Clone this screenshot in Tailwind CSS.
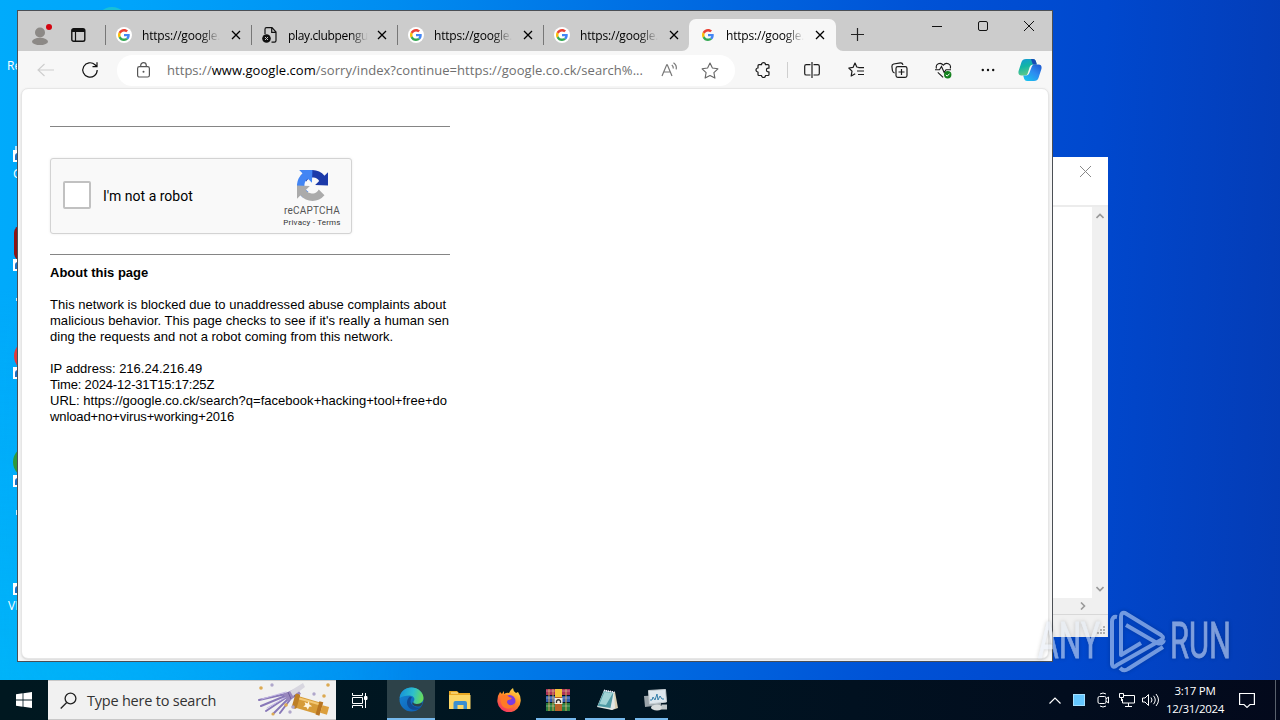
<!DOCTYPE html>
<html lang="en">
<head>
<meta charset="utf-8">
<title>Desktop</title>
<script src="https://cdn.jsdelivr.net/npm/@tailwindcss/browser@4"></script>
</head>
<body class="w-[1280px] h-[720px] overflow-hidden font-['Open_Sans','Noto_Sans',sans-serif]">
<svg class="hidden">
  <symbol id="g" viewBox="0 0 48 48">
    <path fill="#EA4335" d="M24 9.5c3.54 0 6.71 1.22 9.21 3.6l6.85-6.85C35.9 2.38 30.47 0 24 0 14.62 0 6.51 5.38 2.56 13.22l7.98 6.19C12.43 13.72 17.74 9.5 24 9.5z"/>
    <path fill="#4285F4" d="M46.98 24.55c0-1.57-.15-3.09-.38-4.55H24v9.02h12.94c-.58 2.96-2.26 5.48-4.78 7.18l7.73 6c4.51-4.18 7.09-10.36 7.09-17.65z"/>
    <path fill="#FBBC05" d="M10.53 28.59c-.48-1.45-.76-2.99-.76-4.59s.27-3.14.76-4.59l-7.98-6.19C.92 16.46 0 20.12 0 24s.92 7.54 2.56 10.78l7.97-6.19z"/>
    <path fill="#34A853" d="M24 48c6.48 0 11.93-2.13 15.89-5.81l-7.73-6c-2.15 1.45-4.92 2.3-8.16 2.3-6.26 0-11.57-4.22-13.47-9.91l-7.98 6.19C6.51 42.62 14.62 48 24 48z"/>
  </symbol>
  <symbol id="x" viewBox="0 0 10 10"><path d="M1 1l8 8M9 1l-8 8" stroke="currentColor" stroke-width="1.3" fill="none"/></symbol>
  <symbol id="shortcut" viewBox="0 0 12 12"><path d="M0 0h12v12H0z" fill="#fff"/><path d="M3 10V6q0-2 2-2h4" stroke="#1b6fc4" stroke-width="2" fill="none"/></symbol>
</svg>
<main class="relative w-[1280px] h-[720px] overflow-hidden bg-[linear-gradient(93deg,#00abfb_0%,#00a4fb_10%,#008cf0_30%,#0070e4_48%,#0052d6_70%,#0048ce_84%,#043bb4_100%)]">

  <!-- desktop shortcuts partly behind the browser -->
  <div class="absolute inset-0 bg-[linear-gradient(to_top,#00b4f8_0%,transparent_60%)] w-[420px] h-[720px] [mask-image:linear-gradient(to_right,black,transparent)]"></div>
  <div class="absolute left-[96px] top-[7px] w-8 h-8 rounded-full bg-[#18c0d8]"></div>
  <div class="absolute left-[7px] top-[58px] text-[12px] leading-4 text-white whitespace-nowrap">Re</div>
  <svg class="absolute left-[13px] top-[150px] w-3 h-3"><use href="#shortcut"/></svg>
  <div class="absolute left-[15px] top-[146px] w-1 h-1 bg-white/70"></div>
  <div class="absolute left-[13px] top-[166px] text-[12px] leading-4 text-white">G</div>
  <div class="absolute left-[14px] top-[225px] w-6 h-9 rounded-lg bg-[#8c1414]"></div>
  <svg class="absolute left-[13px] top-[259px] w-3 h-3"><use href="#shortcut"/></svg>
  <div class="absolute left-[16px] top-[298px] w-1 h-[3px] bg-white/80"></div>
  <div class="absolute left-[14px] top-[340px] w-8 h-8 rounded-full bg-[#e23a3a]"></div>
  <svg class="absolute left-[13px] top-[367px] w-3 h-3"><use href="#shortcut"/></svg>
  <div class="absolute left-[13px] top-[446px] w-8 h-8 rounded-full bg-[#2e9a3c]"></div>
  <svg class="absolute left-[13px] top-[475px] w-3 h-3"><use href="#shortcut"/></svg>
  <div class="absolute left-[16px] top-[510px] w-1 h-[5px] bg-white/80"></div>
  <svg class="absolute left-[13px] top-[583px] w-3 h-3"><use href="#shortcut"/></svg>
  <div class="absolute left-[8px] top-[598px] text-[12px] leading-4 text-white">VL</div>

  <!-- background window -->
  <section class="absolute left-[940px] top-[157px] w-[168px] h-[480px] bg-white flex flex-col">
    <div class="h-[50px] border-b-2 border-[#ececec] flex justify-end pt-[9px] pr-[17px]"><svg class="w-[11px] h-[11px] text-[#888]" viewBox="0 0 11 11"><path d="M0 0l11 11M11 0L0 11" stroke="currentColor"/></svg></div>
    <div class="h-[391px] flex justify-end">
      <div class="w-4 bg-[#f0f0f0] flex flex-col items-center justify-between py-[6px] pr-[1px]">
        <svg class="w-2 h-[6px]" viewBox="0 0 8 6"><path d="M.5 5L4 1.5 7.500 5" stroke="#999" stroke-width="1.6" fill="none"/></svg>
        <svg class="w-2 h-[6px]" viewBox="0 0 8 6"><path d="M.5 1L4 4.500 7.500 1" stroke="#999" stroke-width="1.6" fill="none"/></svg>
      </div>
    </div>
    <div class="h-[17px] bg-[#f0f0f0] border-b border-[#d8d8d8] flex justify-end items-center pr-[22px]"><svg class="w-[6px] h-2" viewBox="0 0 6 8"><path d="M1 .5L4.500 4 1 7.500" stroke="#999" stroke-width="1.6" fill="none"/></svg></div>
    <div class="flex-1 bg-[#f0f0f0] flex justify-end items-end p-[2px]"><svg class="w-[9px] h-[9px]" viewBox="0 0 9 9" fill="#b0b0b0"><path d="M6 0h2v2H6zM3 3h2v2H3zM6 3h2v2H6zM0 6h2v2H0zM3 6h2v2H3zM6 6h2v2H6z"/></svg></div>
  </section>

  <!-- browser window -->
  <section class="absolute left-[17px] top-[10px] w-[1036px] h-[652px] border border-[#4b4f55] bg-[#f7f7f7] flex flex-col">
    <div class="h-10 bg-[#cccccc] flex shrink-0">
      <div class="w-[87px] flex items-center pl-[13px] gap-[21px] pt-[8px]">
        <svg class="w-[22px] h-[24px] mt-[-4px]" viewBox="0 0 22 24"><circle cx="9" cy="11.500" r="5" fill="#8c8986"/><ellipse cx="9" cy="20.500" rx="8" ry="3.700" fill="#8c8986"/><circle cx="18" cy="6" r="3" fill="#d4040f"/></svg>
        <svg class="w-[15px] h-[14px] ml-[-3px]" viewBox="0 0 15 14"><rect x=".8" y=".8" width="13" height="12.400" rx="1.800" fill="none" stroke="#111" stroke-width="1.400"/><path d="M1 1h13v3H1z" fill="#111"/><path d="M4.500 4v9" stroke="#111" stroke-width="1.200"/></svg>
      </div>
      <div class="w-[146px] flex items-center pt-[8px]"><i class="w-px h-5 bg-[#777]"></i><span class="w-4 h-4 ml-[10px] rounded-full bg-white flex items-center justify-center"><svg class="w-3 h-3"><use href="#g"/></svg></span><span class="ml-[10px] w-[78px] whitespace-nowrap text-[12px] tracking-[-0.2px] pt-px [mask-image:linear-gradient(to_right,black_75%,transparent)]">https://google.</span><svg class="w-[10px] h-[10px] ml-[11px]"><use href="#x"/></svg></div>
      <div class="w-[146px] flex items-center pt-[8px]"><i class="w-px h-5 bg-[#777]"></i><svg class="w-4 h-4 ml-[10px]" viewBox="0 0 16 16"><path d="M3 7V2.200Q3 .7 4.500.7H10L14 5v8.500q0 1.700-1.500 1.700H9.500M9.700 1v4.300H14" fill="none" stroke="#111" stroke-width="1.200"/><circle cx="4.500" cy="11.500" r="4.300" fill="#111"/><path d="M3 10l3 3M6 10l-3 3" stroke="#ccc"/></svg><span class="ml-[10px] w-[80px] whitespace-nowrap text-[12px] tracking-[-0.35px] pt-px [mask-image:linear-gradient(to_right,black_78%,transparent)]">play.clubpengu</span><svg class="w-[10px] h-[10px] ml-[9px]"><use href="#x"/></svg></div>
      <div class="w-[146px] flex items-center pt-[8px]"><i class="w-px h-5 bg-[#777]"></i><span class="w-4 h-4 ml-[10px] rounded-full bg-white flex items-center justify-center"><svg class="w-3 h-3"><use href="#g"/></svg></span><span class="ml-[10px] w-[78px] whitespace-nowrap text-[12px] tracking-[-0.2px] pt-px [mask-image:linear-gradient(to_right,black_75%,transparent)]">https://google.</span><svg class="w-[10px] h-[10px] ml-[11px]"><use href="#x"/></svg></div>
      <div class="w-[146px] flex items-center pt-[8px]"><i class="w-px h-5 bg-[#777]"></i><span class="w-4 h-4 ml-[10px] rounded-full bg-white flex items-center justify-center"><svg class="w-3 h-3"><use href="#g"/></svg></span><span class="ml-[10px] w-[78px] whitespace-nowrap text-[12px] tracking-[-0.2px] pt-px [mask-image:linear-gradient(to_right,black_75%,transparent)]">https://google.</span><svg class="w-[10px] h-[10px] ml-[11px]"><use href="#x"/></svg></div>
      <div class="relative w-[147px] mt-[8px] flex items-center rounded-t-[7px] bg-[#f7f7f7]">
        <svg class="absolute bottom-0 left-[-7px] w-[7px] h-[7px]" viewBox="0 0 7 7"><path d="M7 0v7H0A7 7 0 0 0 7 0" fill="#f7f7f7"/></svg>
        <svg class="absolute bottom-0 right-[-7px] w-[7px] h-[7px]" viewBox="0 0 7 7"><path d="M0 0v7h7A7 7 0 0 1 0 0" fill="#f7f7f7"/></svg>
        <svg class="w-3 h-3 ml-[13px]"><use href="#g"/></svg><span class="ml-[12px] w-[78px] whitespace-nowrap text-[12px] tracking-[-0.2px] pt-px [mask-image:linear-gradient(to_right,black_75%,transparent)]">https://google.</span><svg class="w-[10px] h-[10px] ml-[11px]"><use href="#x"/></svg>
      </div>
      <svg class="w-[13px] h-[13px] ml-[15px] mt-[17px]" viewBox="0 0 13 13"><path d="M6.500 0v13M0 6.500h13" stroke="#222" stroke-width="1.200"/></svg>
      <div class="ml-auto flex pr-[18px] pt-[10px] gap-[36px]">
        <svg class="w-[10px] h-[10px]" viewBox="0 0 10 10"><path d="M0 5.500h10" stroke="#111"/></svg>
        <svg class="w-[10px] h-[10px]" viewBox="0 0 10 10"><rect x=".5" y=".5" width="9" height="9" rx="1.500" fill="none" stroke="#111"/></svg>
        <svg class="w-[10px] h-[10px]" viewBox="0 0 10 10"><path d="M0 0l10 10M10 0L0 10" stroke="#111"/></svg>
      </div>
    </div>

    <div class="h-[37px] shrink-0 flex items-center pt-[1px]">
      <svg class="w-[18px] h-[14px] ml-[19px]" viewBox="0 0 18 14"><path d="M17 7H1M7.500 1L1 7l6.500 6" fill="none" stroke="#cdcdcd" stroke-width="1.100"/></svg>
      <svg class="w-[18px] h-[18px] ml-[26px]" viewBox="0 0 18 18"><path d="M16.200 9A7.200 7.200 0 1 1 14 3.800L15.800 5.500M16 1.200v4.500h-4.500" fill="none" stroke="#111" stroke-width="1.200"/></svg>
      <div class="ml-[18px] w-[618px] h-[31px] rounded-full bg-white flex items-center">
        <svg class="w-[13px] h-4 ml-[20px]" viewBox="0 0 13 16"><rect x=".6" y="4.600" width="11.800" height="10.400" rx="1.800" fill="none" stroke="#555" stroke-width="1.200"/><path d="M3.700 4.500V3.500a2.800 2.800 0 0 1 5.600 0v1" fill="none" stroke="#555" stroke-width="1.200"/><circle cx="6.500" cy="9.800" r="1" fill="#555"/></svg>
        <span class="ml-[17px] w-[480px] pt-px whitespace-nowrap text-[13px] text-[#6f6f6f] tracking-[0.045px]">https://<span class="text-black">www.google.com</span>/sorry/index?continue=https://google.co.ck/search%...</span>
        <svg class="w-[17px] h-[15px] ml-[14px] mt-[-2px]" viewBox="0 0 17 15"><path d="M1 14L5.700 2.800h.6L11 14M2.700 10h6.600M10.800 3q1.700 1.200 1.500 3.500M12.500.8q3.500 2.400 2.700 6.500" fill="none" stroke="#777" stroke-width="1.200"/></svg>
        <svg class="w-[18px] h-[17px] ml-[23px]" viewBox="0 0 18 17"><path d="M9 1l2.400 5 5.500.8-4 3.900 1 5.400L9 13.500l-4.900 2.600 1-5.400-4-3.900 5.500-.8z" fill="none" stroke="#666" stroke-width="1.100" stroke-linejoin="round"/></svg>
      </div>
      <div class="flex flex-1 items-center text-[#1b1b1b]">
        <svg class="w-4 h-4 ml-[20px]" viewBox="0 0 16 16"><path d="M4 2.700h2.500a2 2 0 0 1 4 0H13q1 0 1 1v2.500h-.8a1.800 1.800 0 0 0 0 3.600h.8v2.700q0 1-1 1h-2.500a2 2 0 0 1-4 0H4q-1 0-1-1V10a2 2 0 0 1 0-4V3.700q0-1 1-1z" fill="none" stroke="currentColor" stroke-width="1.200" stroke-linejoin="round"/></svg>
        <i class="w-px h-4 bg-[#cfcfcf] ml-[16px]"></i>
        <svg class="w-4 h-4 ml-[16px]" viewBox="0 0 16 16"><path d="M6.500 2.600H2.300Q.7 2.600.7 4.200v7.200q0 1.600 1.600 1.600H6.500M9.500 2.600h4.200q1.600 0 1.600 1.600v7.200q0 1.600-1.600 1.600H9.500M8 0v16" fill="none" stroke="currentColor" stroke-width="1.200"/></svg>
        <svg class="w-[17px] h-4 ml-[28px]" viewBox="0 0 17 16"><path d="M11 5.500L8.800 5 7 1 5 5.400.8 6l3.200 3.200L3.200 14l4-2.200M10.500 5.600H16M9 9h7M10 12.500h6" fill="none" stroke="currentColor" stroke-width="1.200" stroke-linejoin="round"/></svg>
        <svg class="w-[17px] h-4 ml-[26px]" viewBox="0 0 17 16"><rect x="5" y="4.700" width="11" height="10.600" rx="1.800" fill="none" stroke="currentColor" stroke-width="1.200"/><path d="M10.500 7v6M7.500 10h6M3.600 11Q1.800 10.500 1.400 8.500L.9 4.500Q.8 2.500 2.600 2L9.500.8q2-.1 2.500 2" fill="none" stroke="currentColor" stroke-width="1.200"/></svg>
        <svg class="w-[17px] h-[17px] ml-[27px]" viewBox="0 0 17 17"><path d="M1.500 6.500C0 2 5.500-.5 8.300 3.200 11 -.5 16.800 2 15.200 6.500M0 7.800h4.500l2-3.300 2.700 6 1.800-2.700H16M2.800 10.300l5.300 5" fill="none" stroke="currentColor" stroke-width="1.100"/><circle cx="12.700" cy="12.700" r="3.700" fill="#13801c"/><path d="M10.800 12.800l1.400 1.300 2.400-2.500" stroke="#fff" fill="none"/></svg>
        <svg class="w-[14px] h-1 ml-[29px]" viewBox="0 0 14 4" fill="#111"><circle cx="1.800" cy="2" r="1.200"/><circle cx="7" cy="2" r="1.200"/><circle cx="12.200" cy="2" r="1.200"/></svg>
        <svg class="w-6 h-6 ml-[23px]" viewBox="0 0 24 24"><defs><linearGradient id="c1" x1="0" y1="0" x2=".3" y2="1"><stop stop-color="#1598d8"/><stop offset=".5" stop-color="#12b5a5"/><stop offset="1" stop-color="#5fc98a"/></linearGradient><linearGradient id="c2" x1="1" y1="0" x2=".2" y2="1"><stop stop-color="#1d56cf"/><stop offset=".5" stop-color="#2d8cf0"/><stop offset="1" stop-color="#1ac1ee"/></linearGradient></defs><path d="M8 1h7q2 0 2.800 2l1 3.500H15q-2.500 0-3.300 2.500L9.500 16q-.6 1.500-2.500 1.500H3.500Q-.3 17.500.6 13L3.500 4Q4.500 1 8 1z" fill="url(#c1)"/><path d="M16 23H9q-2 0-2.800-2l-1-3.500H8q2.500 0 3.500-3L14 8q.6-1.500 2.500-1.500h4Q24.300 6.500 23.400 11l-2.900 9q-1 3-4.500 3z" fill="url(#c2)"/><path d="M13 1h2q2 0 2.800 2l1 3.500h-4z" fill="#174bb4"/></svg>
      </div>
    </div>

    <article class="mx-[3px] mb-[2px] flex-1 rounded-[7px] bg-white border border-[#e6e6e6] shadow-sm pl-[28px] text-black font-['Liberation_Sans',Arial,sans-serif]">
      <div class="w-[400px] pt-[37px]">
        <hr class="border-t border-[#858585]">
        <div class="mt-[31px] w-[302px] h-[76px] rounded-[3px] bg-[#f9f9f9] border border-[#d3d3d3] shadow-[0_0_3px_rgba(0,0,0,.08)] flex items-center">
          <span class="ml-3 mb-[2px] w-7 h-7 rounded-[2px] border-2 border-[#c1c1c1] bg-white"></span>
          <span class="ml-3 font-[Roboto,'Liberation_Sans',sans-serif] text-[14px]">I'm not a robot</span>
          <div class="ml-auto mr-[8px] w-[62px] flex flex-col items-center text-[#555] pt-[5px]">
            <svg class="w-[31px] h-[31px] mt-[1px]" viewBox="0 0 64 64"><path d="M64 31.960a32 32 0 0 0-.03-1.370V4.600l-7.190 7.190A32 32 0 0 0 7.270 11.700l11.780 11.900a15.600 15.600 0 0 1 4.770-5.350c2.060-1.600 4.970-2.920 9-2.920.48 0 .86.060 1.130.17 4.990.39 9.310 3.140 11.850 7.130l-8.330 8.330z" fill="#1c3aa9"/><path d="M31.860 0a32 32 0 0 0-1.370.03H4.500l7.190 7.190A32 32 0 0 0 11.600 56.730l11.900-11.780a15.600 15.600 0 0 1-5.350-4.770c-1.600-2.060-2.920-4.970-2.920-9 0-.48.060-.86.170-1.130.39-4.990 3.140-9.310 7.130-11.850l8.330 8.330z" fill="#4285f4"/><path d="M0 32a32 32 0 0 0 .03 1.370V59.400l7.190-7.190A32 32 0 0 0 56.730 52.300L44.950 40.400a15.600 15.600 0 0 1-4.770 5.350c-2.060 1.600-4.970 2.920-9 2.920-.48 0-.86-.060-1.130-.170-4.990-.39-9.310-3.140-11.850-7.130l8.330-8.330z" fill="#ababab"/></svg>
            <span class="mt-[3px] text-[10px] leading-[13px] tracking-[0.2px] font-[Roboto,sans-serif] whitespace-nowrap">reCAPTCHA</span>
            <span class="text-[8px] leading-[11px] tracking-[0.2px] text-[#333] font-[Roboto,sans-serif] whitespace-nowrap">Privacy - Terms</span>
          </div>
        </div>
        <hr class="mt-[20px] border-t border-[#858585]">
        <div class="mt-[10px] text-[13px] leading-4 whitespace-nowrap">
          <b>About this page</b><br><br>
          <p class="tracking-[0.024px]">This network is blocked due to unaddressed abuse complaints about</p>
          <p class="tracking-[0.033px]">malicious behavior. This page checks to see if it's really a human sen</p>
          <p class="tracking-[0.012px]">ding the requests and not a robot coming from this network.</p><br>
          <p>IP address: 216.24.216.49</p>
          <p class="tracking-[-0.17px]">Time: 2024-12-31T15:17:25Z</p>
          <p class="tracking-[0.022px]">URL: https://google.co.ck/search?q=facebook+hacking+tool+free+do</p>
          <p class="tracking-[-0.11px]">wnload+no+virus+working+2016</p>
        </div>
      </div>
    </article>
  </section>

  <!-- watermark -->
  <div class="absolute left-[1038px] top-[609px] w-[194px] h-[64px] opacity-55">
    <svg class="w-[194px] h-[64px] drop-shadow-[0_0_2px_rgba(0,0,0,.35)]" viewBox="0 0 194 64">
      <g fill="#e4ebf5" stroke="#e4ebf5" stroke-width=".8" font-family="Roboto, sans-serif" font-size="50"><text x="0" y="49" textLength="62" lengthAdjust="spacingAndGlyphs">ANY</text><text x="132" y="49" textLength="61" lengthAdjust="spacingAndGlyphs">RUN</text></g>
      <path d="M79 8q-5-1-5 5v42q1 5 5 1l44-25q4-2 0-5L87 4q-4-1-4 4v38l20-12M88 16l31 18q6 2 7-3M82 59q4 4 8 1l35-22" fill="none" stroke="#cfe0f6" stroke-width="4" stroke-linejoin="round"/>
    </svg>
  </div>

  <!-- taskbar -->
  <footer class="absolute left-0 bottom-0 w-full h-10 bg-[linear-gradient(to_right,#001820,#001522_50%,#03091c)] flex items-stretch text-white">
    <div class="w-12 flex items-center justify-center"><svg class="w-4 h-4" viewBox="0 0 16 16" fill="#fff"><path d="M0 2.200l6.600-.9v6.300H0zM7.400 1.200L16 0v7.600H7.400zM0 8.400h6.600v6.300L0 13.800zM7.400 8.400H16V16l-8.600-1.200z"/></svg></div>
    <div class="w-[288px] bg-[#f1f1f1] border-y border-[#c8c8c8] flex items-center text-[#333]">
      <svg class="w-[17px] h-[17px] ml-3" viewBox="0 0 17 17"><circle cx="10.500" cy="6.500" r="5.400" fill="none" stroke="#222" stroke-width="1.300"/><path d="M6.700 10.500L.7 16.500" stroke="#222" stroke-width="1.300"/></svg>
      <span class="ml-[10px] pt-px text-[14.500px] tracking-[-0.22px] w-[171px] whitespace-nowrap">Type here to search</span>
      <svg class="w-[74px] h-[36px]" viewBox="0 0 74 36">
        <g stroke-linecap="round" fill="none"><path d="M32 11L1 18M32 12L3 24M32 13L8 29M33 14L15 32M34 15L22 31" stroke="#8878b8" stroke-width="2"/><path d="M28 10L4 17M30 14L9 26" stroke="#c2b6e3" stroke-width="1"/></g>
        <path d="M25 12l14-6 4 6-13 7z" fill="#9887bd"/><path d="M30 10l3 7M34 8l3 7" stroke="#6f5f9c"/><path d="M32 9l13-8 2 4-12 9z" fill="#d8d6df"/>
        <g transform="rotate(16 53 23)"><rect x="37" y="18" width="27" height="12" rx="2" fill="#d69b38"/><rect x="35" y="16" width="5" height="15" rx="1.500" fill="#bd7f25"/><rect x="60" y="17" width="4" height="14" fill="#b87522"/><rect x="64" y="20" width="7" height="8" fill="#dc9f3d"/><path d="M40 19h20v2H40z" fill="#f3c875"/><path d="M50 20l1.300 3 3.200.8-2.800 1.500-.4 3-2.300-2.200-3 .7 1.500-2.600-1.500-2.300 3 .6z" fill="#fff5df"/></g>
        <g fill="#dcaa52"><circle cx="3" cy="6" r="1.800"/><circle cx="70" cy="3" r="1.800"/><circle cx="28" cy="23" r="1.800"/><circle cx="15" cy="32" r="1.600"/><circle cx="66" cy="14" r="1.800"/></g><g fill="#b0a7cb"><circle cx="14" cy="3" r="1.700"/><circle cx="56" cy="12" r="1.700"/><circle cx="35" cy="25" r="1.800"/><circle cx="32" cy="30" r="1.700"/></g>
      </svg>
    </div>
    <div class="w-[51px] flex items-center justify-center pr-[3px]"><svg class="w-4 h-[15px]" viewBox="0 0 16 15" fill="none" stroke="#fff"><path d="M.5 0v2.500h10V0M.5 15v-2.500h10V15M.5 4.500h10v6H.5zM13.500 0v15"/><path d="M12.500 3.500h2.500v3h-2.500z" fill="#fff"/></svg></div>
    <div class="w-12 bg-[#2d4249] border-b-2 border-[#76b9ed] flex items-center justify-center">
      <svg class="w-[25px] h-[25px]" viewBox="0 0 25 25"><defs><linearGradient id="e1" x1="0" y1=".3" x2="1" y2=".5"><stop stop-color="#1592da"/><stop offset=".55" stop-color="#2dbfcc"/><stop offset="1" stop-color="#69dc58"/></linearGradient><linearGradient id="e2" x1="0" y1="0" x2="1" y2="1"><stop stop-color="#1688d8"/><stop offset="1" stop-color="#0e59ad"/></linearGradient></defs><circle cx="12.500" cy="12.500" r="12" fill="url(#e2)"/><path d="M.7 11C1 5 6 .5 12.500.5S24.500 5.500 24.500 11c0 4-3.500 6-7 6-2.500 0-4-1-3-2.500 2.500-3-.5-6-4-6-4 0-8 1-9.800 2.500z" fill="url(#e1)"/><path d="M11 9.500c-4 3-4 9 0 12 3 2 7 2 11.500-1.500C18 22 12 19 11.500 14.500q0-3 1.500-4z" fill="#114a93"/><path d="M14.500 14.500c-1 1.500.5 2.500 3 2.500q3 0 6-1.500-.5 2-2 3.500-5 1.500-8-1.500-1-1.500 1-3z" fill="#2d4249"/></svg>
    </div>
    <div class="w-[50px] flex items-center justify-center"><svg class="w-[22px] h-5" viewBox="0 0 22 20"><path d="M0 1h8l2 2h11v16H0z" fill="#e9a823"/><path d="M0 5h21.500v14H0z" fill="#fcd666"/><path d="M4.500 19v-6q0-2 2-2H16q2 0 2 2v6h-3.500v-4h-6v4z" fill="#3b8ed0"/><path d="M2 3h7" stroke="#fff2b0"/></svg></div>
    <div class="w-12 flex items-center justify-center"><svg class="w-6 h-6" viewBox="0 0 24 24"><defs><linearGradient id="f1" x1=".8" y1="0" x2=".2" y2="1"><stop stop-color="#ffe14a"/><stop offset=".45" stop-color="#ff8b24"/><stop offset="1" stop-color="#f52c68"/></linearGradient></defs><path d="M3 4l2 2q1-2 2-3v3q3-2 5-1 1-3 4-5 0 3 3 5l2-1q3 4 2.700 9A11.700 11.700 0 0 1 .4 14Q0 8 3 4z" fill="url(#f1)"/><circle cx="12.500" cy="13" r="6" fill="#7b3be0"/><path d="M4 8q5-3 8 1l3 1q-1 2-4 2-2 2 0 4 3 3 7-1-2 6-8 5.500Q2 19 4 8z" fill="#ff7a27"/></svg></div>
    <div class="w-[50px] flex items-center justify-center relative"><i class="absolute bottom-0 left-[3px] w-10 h-[2px] bg-[#76b9ed]"></i><svg class="w-6 h-[22px]" viewBox="0 0 24 22"><path d="M0 0h24v6H0z" fill="#ac3358"/><path d="M0 7h24v6H0z" fill="#315dad"/><path d="M0 14h24v8H0z" fill="#287d3f"/><path d="M3 0v22M7 0v22M20 0v22" stroke="#d5a657" stroke-width="1"/><path d="M0 2h24M0 9h24M0 17h24" stroke="#fff" stroke-opacity=".35"/><path d="M9 0h7v22H9z" fill="#b8622a"/><path d="M9 0h7v8H9z" fill="#f4c33a"/><rect x="8.500" y="9" width="8" height="6" fill="#f4eee0"/><path d="M10.500 14v-2q2-2.500 4 0v2" fill="none" stroke="#333" stroke-width="1.300"/></svg></div>
    <div class="w-12 flex items-center justify-center relative"><i class="absolute bottom-0 left-[2px] w-10 h-[2px] bg-[#76b9ed]"></i><svg class="w-6 h-6" viewBox="0 0 24 24"><path d="M17 4l3 0 3 16-6 2-5-2z" fill="#d9ceb0"/><path d="M9 2l10 2 1 16-3 2-15-3z" fill="#e1e8e6"/><path d="M9 3l9.500 1.500-3 15.500L2.500 18z" fill="#4f9aa5"/><path d="M9.500 4l8.500 1-7 12-6.500-1z" fill="#a2d3d6"/><path d="M9 2.500l10.500 1.700" stroke="#eef" stroke-width="1.800" stroke-dasharray="1 1"/></svg></div>
    <div class="w-[50px] flex items-center justify-center relative"><i class="absolute bottom-0 left-[4px] w-[33px] h-[2px] bg-[#76b9ed]"></i><svg class="w-6 h-[22px]" viewBox="0 0 24 22"><path d="M0 7l17-1v10L1 18z" fill="#9aa4aa"/><path d="M4.500 1.500l17-1 1 12.500-17 2z" fill="#dfe8ee" stroke="#c6ced2"/><path d="M6 11h2l1-3 2 3 2-6 1 6 2-4 2 3h2" fill="none" stroke="#3680ab" stroke-width="1"/><ellipse cx="13" cy="18.500" rx="6" ry="3" fill="#d9dddd"/><path d="M17.500 15.500h5.500v5h-5.500z" fill="#bfc7c9"/></svg></div>
    <div class="ml-auto flex items-center">
      <svg class="w-3 h-[7px]" viewBox="0 0 12 7"><path d="M.5 6.500L6 1l5.500 5.500" fill="none" stroke="#fff" stroke-width="1.200"/></svg>
      <i class="ml-3 w-3 h-3 bg-[#65c7ff] border border-[#a5e0ff]"></i>
      <svg class="w-[13px] h-4 ml-[12px]" viewBox="0 0 13 16" fill="none" stroke="#fff"><path d="M3 2q3-2 6 0M3 14q3 2 6 0M9 7l2.500-2v6L9 9"/><rect x="1" y="4.500" width="8" height="7" rx="1.500"/></svg>
      <svg class="w-4 h-[14px] ml-[9px]" viewBox="0 0 16 14" fill="none" stroke="#fff"><path d="M5 2.500h10.500v7.500H3.500V6M9.500 10v3M6 13.500h7M.5.5h4v4h-4zM2.500 5v3"/></svg>
      <svg class="w-[17px] h-[14px] ml-[7px]" viewBox="0 0 17 14" fill="none" stroke="#fff"><path d="M.5 5h2.500l3.500-3.500v11L3 9H.5zM9 4.500q2 2.500 0 5M11.500 2.800q3.500 4.200 0 8.400M14 1q5 6 0 12"/></svg>
      <div class="w-[60px] ml-[6px] text-center text-[11.500px] leading-[18px] tracking-[-0.3px] whitespace-nowrap"><div>3:17 PM</div><div>12/31/2024</div></div>
      <svg class="w-4 h-[16px] ml-[14px]" viewBox="0 0 16 16"><path d="M.6 1.500h14.800v11H11L8 15.400 5 12.500H.6z" fill="none" stroke="#fff" stroke-width="1.200"/></svg>
      <i class="ml-[20px] mr-[4px] w-px h-10 bg-[#59616d]"></i>
    </div>
  </footer>
</main>
</body>
</html>
